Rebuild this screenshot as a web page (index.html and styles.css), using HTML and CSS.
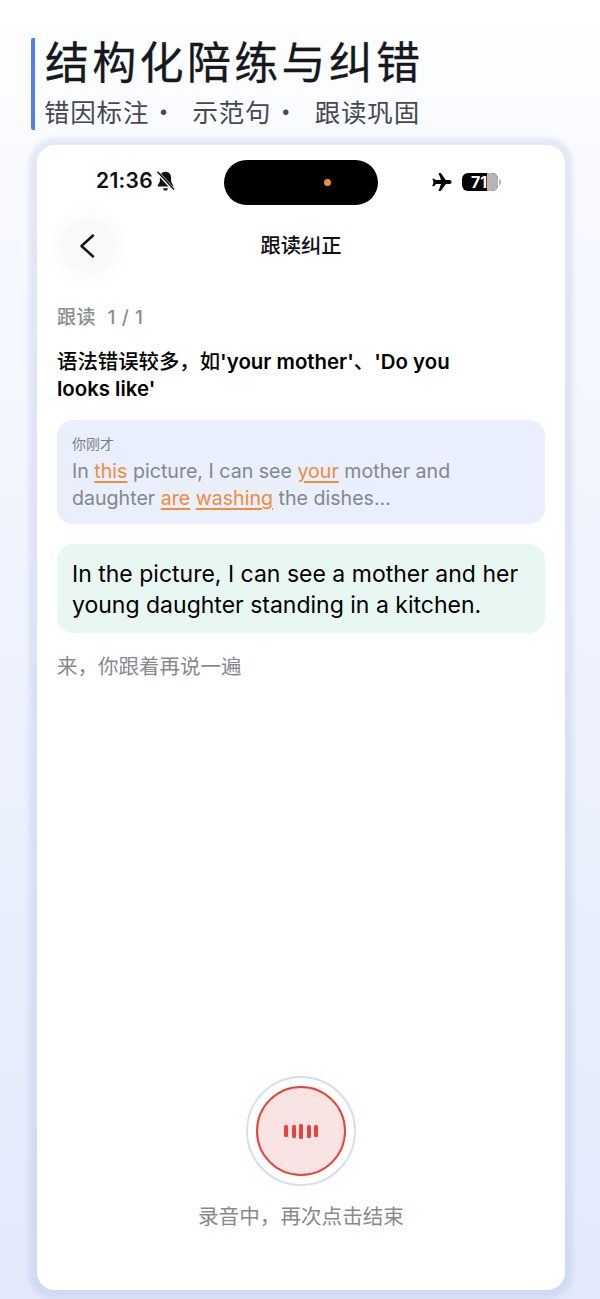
FILE: index.html
```html
<!DOCTYPE html>
<html lang="zh">
<head>
<meta charset="utf-8">
<title>结构化陪练与纠错</title>
<link rel="stylesheet" href="styles.css">
</head>
<body>
<div class="page">
  <header class="hero">
    <h1 class="hero-title">结构化陪练与纠错</h1>
    <p class="hero-sub"><span>错因标注 ·</span><span>示范句 ·</span><span>跟读巩固</span></p>
  </header>
  <main class="phone">
    <div class="status">
      <div class="status-left">
        <span class="time">21:36</span>
        <svg class="bell" viewBox="1.500 0 15 18" width="19" height="22"><path d="M9 1.500c-3 0-4.600 2.300-4.600 5v3L2.500 13v.6h13V13l-1.900-3.500v-3C13.600 3.800 12 1.500 9 1.500z" fill="#111"/><path d="M7 15h4a2 2 0 0 1-4 0z" fill="#111"/><path d="M2.500 2l13.500 14.500" stroke="#fff" stroke-width="2.800"/><path d="M2.500 1.500l13.500 14.500" stroke="#111" stroke-width="1.300"/></svg>
      </div>
      <div class="island"><span class="island-dot"></span></div>
      <div class="status-right">
        <svg class="plane" viewBox="0 0 22 20" width="22" height="20"><path d="M8.500 1h2.300l5 7h3.700c1.200 0 2 .9 2 2s-.8 2-2 2h-3.700l-5 7H8.500l2.500-7H6l-1.800 2.300H2.300L3.500 10 2.300 6.700h1.900L6 8h5z" fill="#000"/></svg>
        <div class="battery"><span class="battery-num">71</span><span class="battery-rest"></span></div><span class="battery-cap"></span>
      </div>
    </div>
    <nav class="nav">
      <button class="back" aria-label="返回"><svg viewBox="0 0 24 24" width="24" height="24"><path d="M15 1.500 3.500 12 15 22.500" fill="none" stroke="#111" stroke-width="2.400" stroke-linecap="round" stroke-linejoin="round"/></svg></button>
      <div class="nav-title">跟读纠正</div>
    </nav>
    <section class="content">
      <div class="progress">跟读&nbsp; 1 / 1</div>
      <h2 class="issue">语法错误较多，如'your mother'、'Do you looks like'</h2>
      <div class="said">
        <div class="said-label">你刚才</div>
        <p class="said-text">In <u>this</u> picture, I can see <u>your</u> mother and daughter <u>are</u> <u>washing</u> the dishes...</p>
      </div>
      <div class="model">In the picture, I can see a mother and her young daughter standing in a kitchen.</div>
      <div class="prompt">来，你跟着再说一遍</div>
    </section>
    <section class="record">
      <div class="ring">
        <div class="mic">
          <span class="bar bar-s"></span><span class="bar"></span><span class="bar bar-l"></span><span class="bar"></span><span class="bar bar-s"></span>
        </div>
      </div>
      <div class="record-hint">录音中，再次点击结束</div>
    </section>
  </main>
</div>
</body>
</html>
```
FILE: styles.css
```css
* { box-sizing: border-box; }
html, body { margin: 0; padding: 0; }
body {
  width: 600px;
  height: 1299px;
  overflow: hidden;
  font-family: Inter, "Noto Sans CJK SC", sans-serif;
  color: #111;
}
.page {
  height: 1299px;
  padding: 38px 35px 9px 37px;
  display: flex;
  flex-direction: column;
  background: linear-gradient(180deg, #ffffff 0%, #f7f9ff 15%, #e2e9fb 100%);
}
.hero {
  margin-left: -6px;
  height: 92px;
  padding-left: 9px;
  border-left: 4px solid #5180f6;
  border-radius: 2px;
  flex: none;
}
.hero-title {
  margin: -3px 0 0 1px;
  height: 51px;
  font: 400 44px/51px "Noto Sans CJK SC", sans-serif;
  letter-spacing: 3.300px;
  color: #15181c;
  -webkit-text-stroke: .3px #15181c;
}
.hero-sub {
  margin: 8px 0 0;
  font: 400 25.500px/34px "Noto Sans CJK SC", sans-serif;
  color: #45494f;
  letter-spacing: 0.800px;
  word-spacing: -5px;
  display: flex;
  gap: 15.500px;
}
.phone {
  margin-top: 15px;
  flex: 1;
  background: #fff;
  border-radius: 18px;
  box-shadow: 0 1px 4px 8px rgba(120, 140, 200, .16);
  display: flex;
  flex-direction: column;
  position: relative;
}
.status {
  height: 60px;
  display: flex;
  align-items: center;
  position: relative;
  flex: none;
}
.status-left {
  position: absolute;
  left: 59px;
  top: 23px;
  display: flex;
  align-items: center;
  gap: 3px;
}
.time { font: 600 21px/26px Inter, sans-serif; color: #111; letter-spacing: .3px; }
.island {
  position: absolute;
  left: 187px;
  top: 15px;
  width: 154px;
  height: 45px;
  border-radius: 23px;
  background: #000;
}
.island-dot {
  position: absolute;
  left: 100px;
  top: 19px;
  width: 7px;
  height: 7px;
  border-radius: 50%;
  background: #f28c38;
}
.status-right {
  position: absolute;
  left: 393px;
  top: 27px;
  display: flex;
  align-items: center;
}
.plane { margin-right: 10px; }
.battery {
  width: 36px;
  height: 18px;
  border-radius: 6px;
  background: #000;
  position: relative;
  overflow: hidden;
}
.battery-num {
  position: absolute;
  left: 9px;
  top: 0;
  font: 700 16px/18px Inter, sans-serif;
  color: #fff;
  z-index: 1;
}
.battery-rest {
  position: absolute;
  right: 0;
  top: 0;
  bottom: 0;
  width: 11px;
  background: #b4b6b8;
}
.battery-cap {
  width: 2px;
  height: 6px;
  margin-left: 1px;
  border-radius: 0 2px 2px 0;
  background: #b9bbbd;
}
.nav {
  height: 82px;
  flex: none;
  display: flex;
  align-items: center;
  justify-content: center;
  position: relative;
}
.back {
  position: absolute;
  left: 24px;
  top: 13px;
  width: 55px;
  height: 55px;
  border: 0;
  padding: 0 0 0 2px;
  border-radius: 50%;
  background: #f9f9fc;
  box-shadow: 0 0 26px rgba(225, 228, 240, .35);
  display: flex;
  align-items: center;
  justify-content: center;
}
.nav-title { font: 500 20.300px/28px "Noto Sans CJK SC", sans-serif; color: #111; margin-top: -4px; }
.content {
  padding: 0 20px;
  flex: 1;
}
.progress {
  margin-top: 18px;
  font: 500 19px/26px Inter, "Noto Sans CJK SC", sans-serif;
  color: #8a8c90;
  letter-spacing: .6px;
}
.issue {
  margin: 17px 0 0;
  width: 410px;
  font: 560 20.400px/27px Inter, "Noto Sans CJK SC", sans-serif;
  color: #000;
}
.said {
  margin-top: 18px;
  height: 104px;
  padding: 14px 15px 0;
  border-radius: 16px;
  background: #e9effc;
}
.said-label {
  font: 400 14px/19px "Noto Sans CJK SC", sans-serif;
  color: #7d7f84;
}
.said-text {
  margin: 5px 0 0;
  font: 400 19.600px/27px Inter, sans-serif;
  color: #85878b;
}
.said-text u {
  color: #f28c38;
  text-decoration-color: #f28c38;
  text-decoration-thickness: 1.500px;
  text-underline-offset: 3px;
}
.model {
  margin-top: 20px;
  height: 89px;
  padding: 15px 15px 0;
  border-radius: 16px;
  background: #e9f7f3;
  font: 420 23px/30.600px Inter, sans-serif;
  color: #000;
}
.prompt {
  margin-top: 20px;
  font: 400 20.500px/27px Inter, "Noto Sans CJK SC", sans-serif;
  color: #87898d;
}
.record {
  flex: none;
  display: flex;
  flex-direction: column;
  align-items: center;
  padding-bottom: 60px;
}
.ring {
  width: 110px;
  height: 110px;
  border-radius: 50%;
  border: 2.500px solid #d4dff5;
  display: flex;
  align-items: center;
  justify-content: center;
}
.mic {
  width: 90px;
  height: 90px;
  border-radius: 50%;
  border: 2.500px solid #e8433a;
  background: #fae3e3;
  display: flex;
  align-items: center;
  justify-content: center;
  gap: 3.500px;
}
.bar { width: 4px; height: 13px; border-radius: 1.500px; background: #e8433a; }
.bar-s { height: 12px; }
.bar-l { height: 15px; }
.record-hint {
  margin-top: 14px;
  font: 400 20.600px/30px "Noto Sans CJK SC", sans-serif;
  color: #87898d;
}
```
